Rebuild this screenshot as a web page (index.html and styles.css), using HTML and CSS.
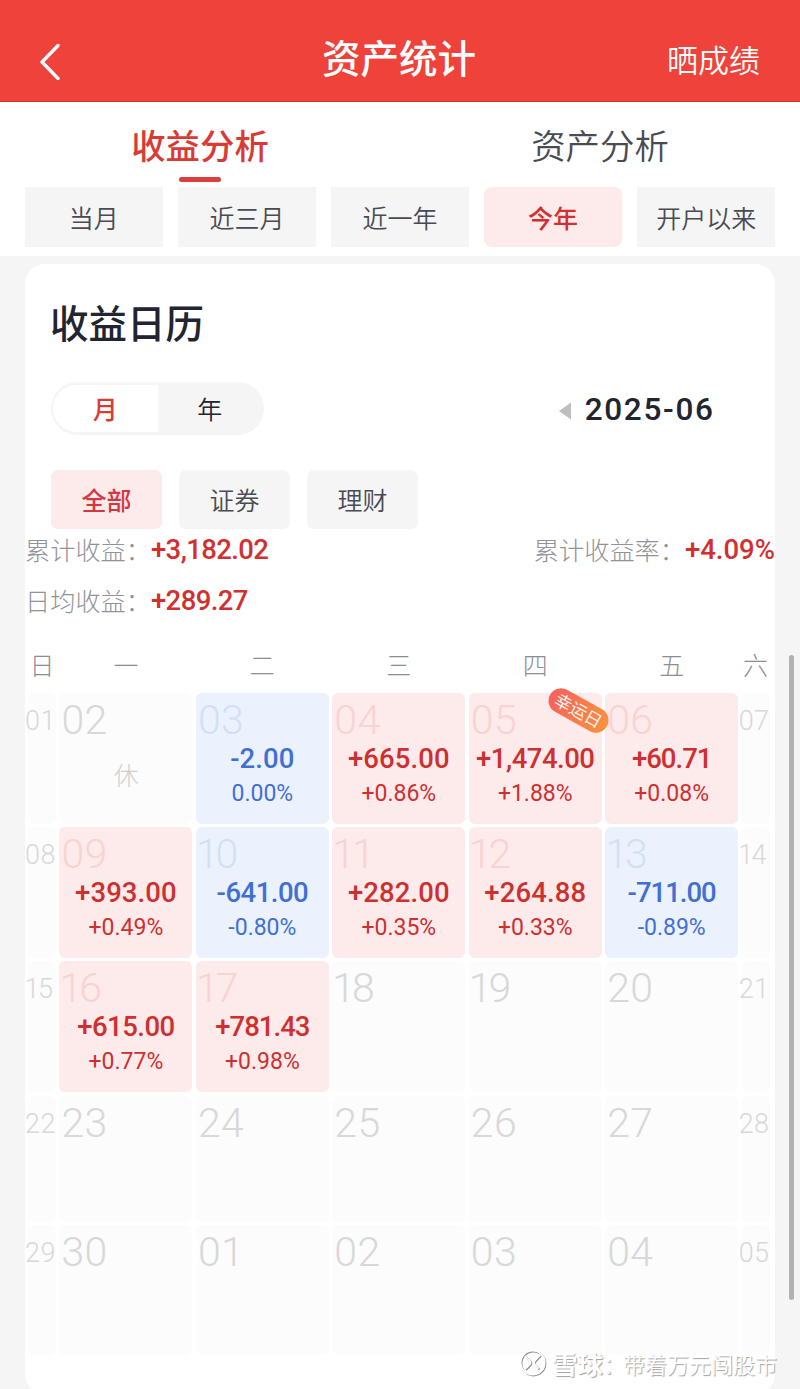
FILE: index.html
```html
<!DOCTYPE html>
<html lang="zh-CN">
<head>
<meta charset="utf-8">
<title>资产统计</title>
<link rel="stylesheet" href="styles.css">
</head>
<body>
<div class="screen">
  <header class="topbar">
    <svg class="back" viewBox="0 0 24 40"><path d="M20 5.500 4 22 20 38.500"/></svg>
    <h1 class="title">资产统计</h1>
    <span class="share">晒成绩</span>
  </header>
  <section class="filters">
    <nav class="tabs">
      <span class="tab tab-on">收益分析</span>
      <span class="tab">资产分析</span>
    </nav>
    <div class="ranges">
      <span class="range">当月</span>
      <span class="range">近三月</span>
      <span class="range">近一年</span>
      <span class="range range-on">今年</span>
      <span class="range">开户以来</span>
    </div>
  </section>
  <main class="card">
    <h2 class="heading">收益日历</h2>
    <div class="period">
      <div class="switch"><span class="opt opt-on">月</span><span class="opt">年</span></div>
      <div class="month"><svg class="prev" viewBox="0 0 12 18"><path d="M12 0.500V17.500L0 9z"/></svg><span class="num">2025-06</span></div>
    </div>
    <div class="kinds">
      <span class="kind kind-on">全部</span>
      <span class="kind">证券</span>
      <span class="kind">理财</span>
    </div>
    <div class="stats">
      <div class="stat"><span>累计收益：</span><b class="num tight">+3,182.02</b></div>
      <div class="stat"><span>累计收益率：</span><b class="num">+4.09%</b></div>
      <div class="stat"><span>日均收益：</span><b class="num tight">+289.27</b></div>
    </div>
    <div class="week">
      <span>日</span><span>一</span><span>二</span><span>三</span><span>四</span><span>五</span><span>六</span>
    </div>
    <div class="days">
      <div class="day side"><i>01</i></div>
      <div class="day"><i>02</i><em>休</em></div>
      <div class="day down"><i>03</i><b>-2.00</b><small>0.00%</small></div>
      <div class="day up"><i>04</i><b>+665.00</b><small>+0.86%</small></div>
      <div class="day up"><i>05</i><b class="tight">+1,474.00</b><small>+1.88%</small><span class="lucky">幸运日</span></div>
      <div class="day up"><i>06</i><b class="tighter">+60.71</b><small>+0.08%</small></div>
      <div class="day side"><i>07</i></div>

      <div class="day side"><i>08</i></div>
      <div class="day up"><i>09</i><b>+393.00</b><small>+0.49%</small></div>
      <div class="day down"><i class="one">10</i><b class="tight">-641.00</b><small>-0.80%</small></div>
      <div class="day up"><i class="one">11</i><b>+282.00</b><small>+0.35%</small></div>
      <div class="day up"><i class="one">12</i><b>+264.88</b><small>+0.33%</small></div>
      <div class="day down"><i class="one">13</i><b class="tighter">-711.00</b><small>-0.89%</small></div>
      <div class="day side"><i class="one">14</i></div>

      <div class="day side"><i class="one">15</i></div>
      <div class="day up"><i class="one">16</i><b class="tight">+615.00</b><small>+0.77%</small></div>
      <div class="day up"><i class="one">17</i><b class="tighter">+781.43</b><small>+0.98%</small></div>
      <div class="day"><i class="one">18</i></div>
      <div class="day"><i class="one">19</i></div>
      <div class="day"><i>20</i></div>
      <div class="day side"><i>21</i></div>

      <div class="day side"><i>22</i></div>
      <div class="day"><i>23</i></div>
      <div class="day"><i>24</i></div>
      <div class="day"><i>25</i></div>
      <div class="day"><i>26</i></div>
      <div class="day"><i>27</i></div>
      <div class="day side"><i>28</i></div>

      <div class="day side"><i>29</i></div>
      <div class="day"><i>30</i></div>
      <div class="day"><i>01</i></div>
      <div class="day"><i>02</i></div>
      <div class="day"><i>03</i></div>
      <div class="day"><i>04</i></div>
      <div class="day side"><i>05</i></div>
    </div>
  </main>
  <div class="scrollbar"></div>
  <div class="watermark">
    <svg class="mark" viewBox="0 0 28 28">
      <g class="mark-shade"><circle cx="14.500" cy="14.500" r="12"/><path d="M7 8 12 13Q13 14.500 12 16L7 21M22 7 16.500 13Q15.500 14.500 16.500 16L20.500 20.500"/></g>
      <g class="mark-face"><circle cx="13.700" cy="13.700" r="12"/><path d="M6 7 11 12.200Q12 13.700 11 15.200L6 20M21 6 15.500 12.200Q14.500 13.700 15.500 15.200L19.500 19.700"/></g>
    </svg>
    <span class="brand">雪球</span><span class="colon">：</span><span class="author">带着万元闯股市</span>
  </div>
</div>
</body>
</html>
```
FILE: styles.css
```css
* { box-sizing: border-box; }
body {
  margin: 0;
  font-family: "Noto Sans CJK SC", sans-serif;
  font-weight: 350;
  color: #484b53;
  background: #f5f5f5;
}
.screen { position: relative; width: 800px; height: 1389px; overflow: hidden; }
.num, .day i, .day b, .day small { font-family: Roboto, "Noto Sans CJK SC", sans-serif; }

.topbar {
  height: 102px;
  display: grid;
  grid-template-columns: 1fr auto 1fr;
  align-items: center;
  padding: 16px 40px 0 38px;
  background: #ee423b;
  border-bottom: 1px solid #cf3433;
  color: #fff;
}
.back { width: 24px; height: 40px; margin-top: 2px; fill: none; stroke: #fff; stroke-width: 3.4; stroke-linecap: round; stroke-linejoin: round; }
.title { margin: 0 0 5px; font-size: 38.5px; line-height: 50px; font-weight: 500; }
.share { justify-self: end; font-size: 31px; line-height: 40px; }

.filters { height: 154px; background: #fff; padding: 16px 25px 0; }
.tabs { display: flex; height: 69px; margin: 0 -25px; }
.tab { flex: 1; display: flex; flex-direction: column; align-items: center; font-size: 34.4px; line-height: 52px; }
.tab-on { color: #d93a35; font-weight: 500; }
.tab-on::after { content: ""; width: 42px; height: 5px; margin-top: 7px; border-radius: 3px; background: #db3f3d; }
.ranges { display: grid; grid-template-columns: repeat(5, 1fr); gap: 15.5px; }
.range { height: 60px; text-align: center; font-size: 25px; line-height: 60px; background: #f5f5f5; }
.range-on { background: #fdeaea; border-radius: 8px; color: #d2302f; font-weight: 500; }

.card { width: 750px; height: 1130px; margin: 8px 25px 0; padding: 27px 0 0; border-radius: 20px; background: #fff; }
.heading { margin: 0 25px; font-size: 38.5px; line-height: 60px; font-weight: 500; color: #22242f; }
.period { display: flex; justify-content: space-between; align-items: center; height: 53px; margin: 31px 62px 0 26px; }
.switch { display: flex; width: 213px; height: 53px; padding: 3px 2px; border-radius: 27px; background: #f5f5f5; }
.opt { flex: 1; text-align: center; font-size: 25px; line-height: 46px; color: #22242f; }
.opt-on { border-radius: 24px 0 0 24px; background: #fff; color: #d93a35; font-weight: 500; }
.month { display: flex; align-items: center; gap: 14px; font-size: 31.5px; line-height: 40px; font-weight: 500; letter-spacing: 1.7px; color: #22242f; }
.month .num { margin: 2px -1.700px 0 0; }
.prev { width: 12px; height: 18px; margin-top: 4px; fill: #bdbec2; }
.kinds { display: flex; gap: 17px; margin: 35px 26px 0; }
.kind { width: 111px; height: 59px; border-radius: 7px; background: #f5f5f5; text-align: center; font-size: 25px; line-height: 58px; }
.kind-on { background: #fdeaea; color: #d63642; font-weight: 500; }

.stats { display: grid; grid-template-columns: 1fr auto; margin: -5px 0 0; row-gap: 1px; }
.stat { display: flex; height: 50px; font-size: 25.2px; line-height: 50px; color: #929397; font-weight: 300; white-space: nowrap; }
.stat b { margin-top: 1px; font-size: 27.5px; font-weight: 500; letter-spacing: 0; color: #d2302f; }
.stat b.tight { letter-spacing: -0.6px; }
.week, .days { display: grid; grid-template-columns: 28px repeat(5, 133px) 28px; column-gap: 3.45px; margin-left: 3px; }
.week { height: 50px; margin-top: 15px; font-size: 25px; line-height: 49px; color: #8d8e92; font-weight: 300; }
.week span { display: flex; justify-content: center; }
.days { margin-top: 2.5px; grid-template-rows: repeat(3, 131px) 126px 130px; row-gap: 3.4px; }
.day {
  position: relative;
  display: flex;
  flex-direction: column;
  align-items: center;
  padding-top: 4px;
  border-radius: 6px;
  background: #fcfcfc;
  white-space: nowrap;
}
.day i { align-self: flex-start; margin-left: 2px; font-style: normal; font-weight: 300; font-size: 41px; line-height: 47px; letter-spacing: 0.4px; color: #d8d8d8; }
.day b { margin-top: -3px; font-size: 27.5px; font-weight: 500; line-height: 36px; letter-spacing: 0.1px; }
.day b.tight { letter-spacing: -0.5px; }
.day b.tighter { letter-spacing: -1px; }
.day small { margin-top: 1px; font-size: 23px; font-weight: 400; line-height: 32px; }
.day em { font-style: normal; font-weight: 300; font-size: 25px; line-height: 36px; margin-top: 12px; color: #cfcfcf; }
.day i.one { margin-left: 0; letter-spacing: -3px; }
.day.side i { margin-left: -3px; font-size: 27px; line-height: 49px; letter-spacing: 0.4px; }
.day.side i.one { margin-left: -3.500px; letter-spacing: -1.500px; }
.up { background: #fdeaea; color: #cd302f; }
.up i { color: #f9d2d2; }
.down { background: #ecf1fe; color: #4270d2; }
.down i { color: #d2e0f6; }
.lucky {
  position: absolute;
  z-index: 1;
  right: -9px;
  top: 5px;
  width: 65px;
  height: 25px;
  border-radius: 13px;
  transform: rotate(29deg);
  background: linear-gradient(90deg, #f7625c, #f9923f);
  color: #fff;
  font-size: 17px;
  line-height: 23px;
  text-align: center;
}
.scrollbar { position: absolute; left: 789px; top: 655px; width: 5px; height: 645px; border-radius: 3px; background: #b2b2b2; }
.watermark {
  position: absolute;
  left: 519px;
  top: 1345px;
  display: flex;
  align-items: center;
  height: 36px;
  line-height: 36px;
  color: #fff;
  text-shadow: 1px 1px 1px #a0a0a0;
  white-space: nowrap;
}
.mark { width: 28px; height: 28px; fill: none; stroke-width: 1.8; }
.mark-shade { stroke: #8e8e8e; }
.mark-face { stroke: #fff; }
.brand { margin-left: 5px; font-size: 25.5px; font-weight: 700; }
.colon { width: 20px; font-size: 22px; }
.author { font-size: 22px; }
```
